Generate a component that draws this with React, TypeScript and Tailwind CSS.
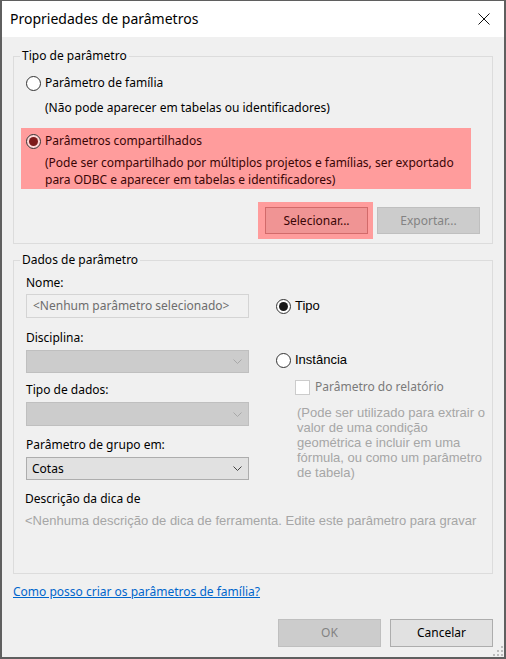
import React from 'react';

const ui = "font-['Noto_Sans',sans-serif] text-[12px] leading-[16px]";
const thin = "font-['Liberation_Sans',sans-serif] text-[13px]";

function Radio({ checked, dot = '#1a1a1a', fill = '#ffffff' }: { checked?: boolean; dot?: string; fill?: string }) {
  return (
    <span
      className="flex h-[15px] w-[15px] shrink-0 items-center justify-center rounded-full border border-[#333333]"
      style={{ backgroundColor: fill }}
    >
      {checked && <span className="h-[9px] w-[9px] rounded-full" style={{ backgroundColor: dot }} />}
    </span>
  );
}

function Chevron({ color }: { color: string }) {
  return (
    <svg width="9" height="5" viewBox="0 0 9 5" fill="none">
      <path d="M0.5 0.5L4.5 4.5L8.5 0.5" stroke={color} strokeWidth="1" />
    </svg>
  );
}

function Combo({ value, disabled, h }: { value?: string; disabled?: boolean; h: string }) {
  return (
    <div
      className={`flex ${h} w-[223px] items-center justify-between border pl-[5px] pr-[6px] ${
        disabled ? 'border-[#bfbfbf] bg-[#cccccc]' : 'border-[#adadad] bg-[#e1e1e1]'
      }`}
    >
      <span className="text-black">{value}</span>
      <Chevron color={disabled ? '#a8a8a8' : '#444444'} />
    </div>
  );
}

export default function App() {
  return (
    <div className={`relative flex h-[659px] w-[506px] flex-col border-x-2 border-b-2 border-t border-[#5f5f5f] bg-[#f0f0f0] text-black ${ui}`}>
      {/* barra de título */}
      <div className="flex h-[36px] shrink-0 items-center justify-between bg-white pl-[8px] pr-[14px]">
        <span className="text-[14px] leading-[20px]">Propriedades de parâmetros</span>
        <svg width="12" height="12" viewBox="0 0 12 12" fill="none">
          <path d="M0.5 0.5L11.5 11.5M11.5 0.5L0.5 11.5" stroke="#111111" strokeWidth="1" />
        </svg>
      </div>

      <div className="flex flex-1 flex-col px-[11px] pt-[11px]">
        {/* Tipo de parâmetro */}
        <fieldset className="border border-[#dcdcdc] pb-[4px]">
          <legend className="ml-[6px] px-[2px] leading-[16px]">Tipo de parâmetro</legend>

          <div className="ml-[12px] mt-[11px] flex h-[16px] items-center gap-[4px]">
            <Radio />
            <span>Parâmetro de família</span>
          </div>
          <p className="ml-[31px] mt-[9px]">(Não pode aparecer em tabelas ou identificadores)</p>

          <div className="ml-[7px] mt-[12px] w-[450px] bg-[#ff9c9c] pb-[1px] pt-[5px] text-[#3a0606]">
            <div className="ml-[5px] flex h-[16px] items-center gap-[4px]">
              <Radio checked dot="#7e1b1b" fill="#ffd6d6" />
              <span>Parâmetros compartilhados</span>
            </div>
            <p className="ml-[24px] mt-[5px] leading-[17px]">
              (Pode ser compartilhado por múltiplos projetos e famílias, ser exportado
              <br />
              para ODBC e aparecer em tabelas e identificadores)
            </p>
          </div>

          <div className="mt-[13px] flex items-start justify-end pr-[12px]">
            <div className="bg-[#ff9c9c] pb-[5px] pl-[7px] pr-[5px] pt-[5px]">
              <button className="flex h-[27px] w-[103px] items-center justify-center border border-[#d26a6a] bg-[#f09494] text-[#3a0606]">
                Selecionar...
              </button>
            </div>
            <button className="ml-[4px] mt-[5px] flex h-[27px] w-[103px] items-center justify-center border border-[#bfbfbf] bg-[#cccccc] text-[#838383]">
              Exportar...
            </button>
          </div>
        </fieldset>

        {/* Dados de parâmetro */}
        <fieldset className="mt-[8px] h-[322px] border border-[#dcdcdc]">
          <legend className="ml-[6px] px-[2px] leading-[16px]">Dados de parâmetro</legend>

          <div className="flex">
            <div className="ml-[12px] flex w-[223px] flex-col">
              <span className="mt-[7px]">Nome:</span>
              <div className="mt-[3px] flex h-[24px] items-center border border-[#d4d4d4] pl-[6px] text-[#6d6d6d]">
                &lt;Nenhum parâmetro selecionado&gt;
              </div>
              <span className="mt-[12px]">Disciplina:</span>
              <div className="mt-[4px]">
                <Combo disabled h="h-[23px]" />
              </div>
              <span className="mt-[9px]">Tipo de dados:</span>
              <div className="mt-[4px]">
                <Combo disabled h="h-[24px]" />
              </div>
              <span className="mt-[11px]">Parâmetro de grupo em:</span>
              <div className="mt-[4px]">
                <Combo value="Cotas" h="h-[23px]" />
              </div>
            </div>

            <div className={`ml-[27px] flex flex-1 flex-col ${thin}`}>
              <div className="mt-[30px] flex h-[16px] items-center gap-[4px]">
                <Radio checked />
                <span>Tipo</span>
              </div>
              <div className="mt-[38px] flex h-[16px] items-center gap-[4px]">
                <Radio />
                <span>Instância</span>
              </div>
              <div className="ml-[19px] mt-[11px] flex h-[16px] items-center gap-[5px] text-[#7a7a7a]">
                <span className="h-[15px] w-[15px] border border-[#cccccc] bg-white" />
                <span className={ui}>Parâmetro do relatório</span>
              </div>
              <p className="ml-[21px] mt-[10px] leading-[15px] text-[#a6a6a6]">
                (Pode ser utilizado para extrair o<br />
                valor de uma condição<br />
                geométrica e incluir em uma<br />
                fórmula, ou como um parâmetro<br />
                de tabela)
              </p>
            </div>
          </div>

          <p className="ml-[11px] mt-[11px]">Descrição da dica de</p>
          <p className={`ml-[11px] mt-[6px] w-[460px] overflow-hidden whitespace-nowrap leading-[16px] text-[#a6a6a6] ${thin}`}>
            &lt;Nenhuma descrição de dica de ferramenta. Edite este parâmetro para gravar
          </p>
        </fieldset>

        <a href="#" className="mt-[10px] self-start text-[#0066cc] underline">
          Como posso criar os parâmetros de família?
        </a>

        <div className="mt-[19px] flex justify-end gap-[9px]">
          <button className="flex h-[28px] w-[103px] items-center justify-center border border-[#bfbfbf] bg-[#cccccc] text-[#838383]">
            OK
          </button>
          <button className="flex h-[28px] w-[103px] items-center justify-center border border-[#adadad] bg-[#e1e1e1]">
            Cancelar
          </button>
        </div>
      </div>

      {/* alça de redimensionar */}
      <svg className="absolute bottom-[1px] right-[1px]" width="10" height="10" viewBox="0 0 10 10">
        <rect x="8" y="0" width="2" height="2" fill="#bcbcbc" />
        <rect x="4" y="4" width="2" height="2" fill="#bcbcbc" />
        <rect x="8" y="4" width="2" height="2" fill="#bcbcbc" />
        <rect x="0" y="8" width="2" height="2" fill="#bcbcbc" />
        <rect x="4" y="8" width="2" height="2" fill="#bcbcbc" />
        <rect x="8" y="8" width="2" height="2" fill="#bcbcbc" />
      </svg>
    </div>
  );
}
